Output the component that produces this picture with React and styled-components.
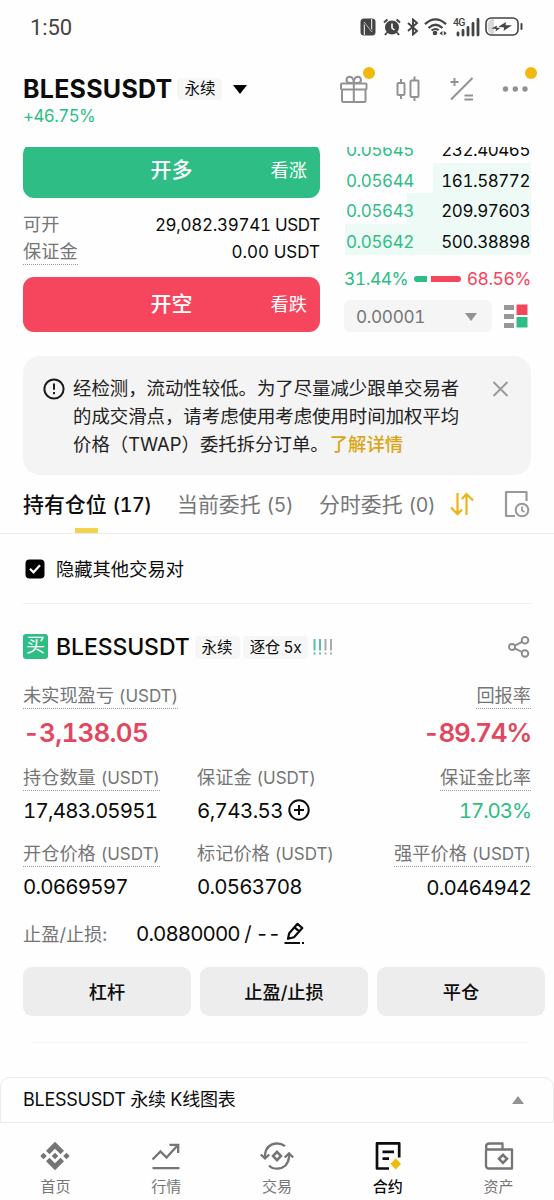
import React, { useState } from 'react'
import styled, { createGlobalStyle } from 'styled-components'

const GlobalStyle = createGlobalStyle`
  * {
    box-sizing: border-box;
  }

  body {
    margin: 0;
    background: #fefefe;
    color: #0c0c0c;
    font-family: Inter, 'Noto Sans CJK SC', sans-serif;
    font-feature-settings: 'tnum';
  }

  svg {
    display: block;
    flex-shrink: 0;
  }

  button {
    font: inherit;
    color: inherit;
    border: none;
    padding: 0;
    cursor: pointer;
  }
`

const green = '#2ebd85'
const red = '#f6465d'
const yellow = '#f0b90b'
const gray = '#757575'
const iconGray = '#929292'

const Screen = styled.main`
  width: 554px;
  height: 1200px;
  overflow: hidden;
  display: flex;
  flex-direction: column;
`

const Text = styled.span`
  font-size: ${props => props.$size || 18}px;
  line-height: ${props => props.$line || 24}px;
  font-weight: ${props => props.$weight || 400};
  letter-spacing: ${props => props.$track || 0}px;
  color: ${props => props.$color || 'inherit'};
  white-space: nowrap;
`

const StatusBar = styled.div`
  height: 55px;
  padding: 0 31px 0 30px;
  display: flex;
  align-items: center;
  justify-content: space-between;
  color: #444;
`

const Clock = styled.span`
  font-family: Roboto, sans-serif;
  font-size: 22px;
  line-height: 54px;
  letter-spacing: -0.1px;
`

const StatusIcons = styled.div`
  display: flex;
  align-items: center;
  height: 20px;
  margin-top: -2px;
`

const Header = styled.header`
  height: 92px;
  padding: 20px 23px 0 23px;
  display: flex;
  justify-content: space-between;
`

const TitleLine = styled.div`
  display: flex;
  align-items: center;
  height: 28px;
`

const TitleArrow = styled.div`
  margin-left: 11px;
`

const Change = styled.div`
  font-size: 17px;
  line-height: 26px;
  letter-spacing: -0.6px;
  color: ${green};
`

const Tag = styled.span`
  height: ${props => props.$height || 22}px;
  padding: 0 ${props => props.$pad || 7}px;
  margin-left: ${props => props.$gap || 5}px;
  border-radius: 4px;
  background: #f6f6f6;
  font-size: 15.5px;
  line-height: ${props => props.$height || 22}px;
  letter-spacing: ${props => props.$track || 0}px;
  white-space: nowrap;
`

const Tools = styled.div`
  display: flex;
  align-items: center;
  gap: 24px;
  height: 28px;
  color: ${iconGray};
`

const Tool = styled.div`
  position: relative;
  width: 30px;
  height: 30px;
`

const Dot = styled.i`
  position: absolute;
  top: -7px;
  right: ${props => props.$right}px;
  width: 12px;
  height: 12px;
  border-radius: 50%;
  background: ${yellow};
`

const TradePanel = styled.section`
  height: 185px;
  padding: 0 23px;
  overflow: hidden;
  display: flex;
  gap: 24px;
`

const OrderForm = styled.div`
  width: 297px;
`

const SideButton = styled.button`
  width: 297px;
  height: 55px;
  margin-top: ${props => props.$top || 0}px;
  padding: 0 13px 1px;
  border-radius: 11px;
  background: ${props => props.$color};
  color: #fff;
  display: grid;
  grid-template-columns: 1fr auto 1fr;
  align-items: center;

  span:last-child {
    justify-self: end;
  }
`

const InfoLine = styled.div`
  display: flex;
  justify-content: space-between;
  height: 27px;
  margin-top: ${props => props.$top || 0}px;
`

const Dotted = styled.span`
  align-self: ${props => props.$end ? 'flex-end' : 'flex-start'};
  height: 25px;
  font-size: 18.2px;
  line-height: 23px;
  color: ${gray};
  white-space: nowrap;
  border-bottom: 1px ${props => props.$plain ? 'solid transparent' : 'dotted #9a9a9a'};
`

const Unit = styled.span`
  font-size: 17px;
  letter-spacing: -0.05px;
`

const Book = styled.div`
  width: 187px;
`

const Levels = styled.div`
  margin: -15px 0 0 1px;
`

const Level = styled.div`
  height: 30.7px;
  padding: 6px 1px 0 1px;
  display: flex;
  justify-content: space-between;
  background: linear-gradient(#eefaf6, #eefaf6) right / ${props => props.$depth}px 100% no-repeat;
`

const Ratio = styled.div`
  margin-top: 12px;
  height: 24px;
  display: flex;
  align-items: center;
  justify-content: space-between;
`

const RatioBar = styled.div`
  width: 47px;
  height: 6px;
  display: flex;
  gap: 4px;
`

const RatioPart = styled.i`
  flex: ${props => props.$share};
  background: ${props => props.$color};
  border-radius: ${props => props.$left ? '3px 0 0 3px' : '0 3px 3px 0'};
`

const StepLine = styled.div`
  margin-top: 9px;
  display: flex;
  align-items: center;
  gap: 12px;
`

const StepSelect = styled.div`
  width: 148px;
  height: 33px;
  padding: 1px 15px 0 12px;
  border-radius: 7px;
  background: #f5f5f5;
  color: ${gray};
  display: flex;
  align-items: center;
  justify-content: space-between;
`

const Notice = styled.section`
  margin: 24px 23px 0;
  height: 119px;
  padding: 19px 22px 0 21px;
  border-radius: 17px;
  background: #f4f4f4;
  display: flex;
  align-items: flex-start;
`

const NoticeText = styled.p`
  margin: 0 0 0 8px;
  width: 390px;
  font-size: 18.4px;
  line-height: 27.9px;
  color: #222;
  white-space: nowrap;

  a {
    color: #dba511;
    font-weight: 500;
    margin-left: -4px;
  }
`

const Tabs = styled.nav`
  height: 59px;
  padding: 0 24px 0 23px;
  display: flex;
  border-bottom: 1px solid #ececec;
`

const Tab = styled.button`
  position: relative;
  width: ${props => props.$width}px;
  height: 59px;
  background: none;
  display: flex;
  align-items: center;
  gap: 6px;
  color: ${props => props.$active ? '#0c0c0c' : '#777'};

  &::after {
    content: '';
    display: ${props => props.$active ? 'block' : 'none'};
    position: absolute;
    left: 52px;
    bottom: 1px;
    width: 23px;
    height: 5px;
    background: #f2d34b;
  }
`

const TabIcon = styled.div`
  margin-top: ${props => props.$top}px;
`

const Filter = styled.label`
  height: 70px;
  margin: 0 23px;
  padding: 1px 0 0 2px;
  display: flex;
  align-items: center;
  gap: 11px;
  border-bottom: 1px solid #f0f0f0;
`

const Position = styled.section`
  padding: 29px 23px 0;
  height: 439px;
`

const PositionHead = styled.div`
  height: 28px;
  display: flex;
  align-items: center;
`

const BuyBadge = styled.span`
  width: 25px;
  height: 25px;
  margin: -1px 8px 0 0;
  border-radius: 3px;
  background: ${green};
  color: #fff;
  font-size: 19px;
  line-height: 24px;
  text-align: center;
`

const Spacer = styled.div`
  flex: 1;
`

const Stats = styled.div`
  display: grid;
  grid-template-columns: 174px 1fr auto;
  height: ${props => props.$height}px;
  margin-top: ${props => props.$top || 0}px;
`

const Stat = styled.div`
  display: flex;
  flex-direction: column;
  align-items: ${props => props.$end ? 'flex-end' : 'flex-start'};
`

const Value = styled.div`
  height: 28px;
  margin-top: ${props => props.$top || 6}px;
  display: flex;
  align-items: center;
  gap: ${props => props.$gap || 0}px;
  font-size: 20.5px;
  line-height: 28px;
  letter-spacing: ${props => props.$track || -0.8}px;
  color: ${props => props.$color || 'inherit'};
  white-space: nowrap;
`

const Pnl = styled(Value)`
  margin-top: 10px;
  font-size: 26px;
  font-weight: 600;
  letter-spacing: ${props => props.$track}px;
  color: #e2475f;
`

const StopLine = styled.div`
  display: flex;
  align-items: center;
  height: 28px;
`

const StopLabel = styled.span`
  width: 113px;
  margin-top: -2px;
  font-size: 18.2px;
  color: ${gray};
`

const Actions = styled.div`
  display: grid;
  grid-template-columns: repeat(3, 168px);
  gap: 9px;
  margin-top: 19px;
`

const Action = styled.button`
  height: 49px;
  padding-bottom: 1px;
  border-radius: 9px;
  background: #ededed;
  font-size: 18.2px;
  font-weight: 500;
`

const Divider = styled.hr`
  border: none;
  height: 1px;
  margin: 26px 3px 0 8px;
  background: #f6f6f6;
`

const ChartDrawer = styled.section`
  margin-top: 34px;
  height: 46px;
  padding: 0 29px 0 22px;
  border: 1px solid #ebebeb;
  border-radius: 10px 10px 0 0;
  display: flex;
  align-items: center;
  justify-content: space-between;
  flex-shrink: 0;
`

const BottomNav = styled.nav`
  display: grid;
  grid-template-columns: repeat(5, 110.8px);
  height: 77px;
  padding-top: 18px;
`

const NavItem = styled.div`
  display: flex;
  flex-direction: column;
  align-items: center;
  font-size: 15px;
  line-height: 20px;
  gap: 6px;
  font-weight: ${props => props.$active ? 500 : 400};
  color: ${props => props.$active ? '#0c0c0c' : gray};
`

const Glyph = styled.svg`
  margin-left: ${props => props.$left || 0}px;
  margin-top: ${props => props.$top || 0}px;
`

const Svg = ({ w, h, children, ...rest }) => (
  <Glyph width={w} height={h} viewBox={`0 0 ${w} ${h}`} fill="none" stroke="currentColor" strokeWidth="2" {...rest}>
    {children}
  </Glyph>
)

const Triangle = ({ w, h, up, color }) => (
  <Svg w={w} h={h} stroke="none" fill={color}>
    <path d={up ? `M0 ${h}L${w / 2} 0L${w} ${h}Z` : `M0 0H${w}L${w / 2} ${h}Z`} />
  </Svg>
)

const StatusGlyphs = () => (
  <StatusIcons>
    <Svg w={16} h={18}>
      <rect x="0.5" y="0.5" width="15" height="17" rx="3.5" fill="currentColor" stroke="none" />
      <path d="M4.3 17V4.2L11.7 14M11.7 1V13.8L4.3 4" stroke="#fff" strokeWidth="1" />
      <path d="M3.2 1.5L12.5 13.5M3.5 4.5L12.8 16.5" strokeWidth="1.2" />
    </Svg>
    <Svg w={18} h={18} $left={7}>
      <circle cx="9" cy="9.5" r="7" fill="currentColor" stroke="none" />
      <path d="M1 4.5L4.5 1.5M17 4.5L13.5 1.5M4 14.5L2 17M14 14.5L16 17" />
      <path d="M9 5.5V10L11.5 12" stroke="#fff" strokeWidth="1.6" />
    </Svg>
    <Svg w={12} h={18} $left={6}>
      <path d="M1 5L10 13L6 16.5V1.5L10 5L1 13" strokeWidth="1.9" />
    </Svg>
    <Svg w={24} h={18} $left={5}>
      <path d="M1 6.2Q11.5 -3.5 22 6.2M4.5 10Q11.5 3.5 18.5 10" strokeWidth="2.3" />
      <path d="M7.6 12.6Q11 9.8 14.6 12.2" strokeWidth="2" />
      <circle cx="11" cy="15" r="2.3" fill="currentColor" stroke="none" />
      <path d="M18.4 13V17.5L15.5 15.2ZM19.8 13V17.5L22.8 15.2Z" fill="currentColor" stroke="none" />
    </Svg>
    <Svg w={27} h={20} $left={5}>
      <text x="0" y="9" fontFamily="Roboto" fontSize="10.5" fontWeight="500" stroke="none" fill="currentColor" textLength="12.5">4G</text>
      <path d="M5 16V18M10 13.5V18M15 10.5V18M20 6.5V18M25 2.5V18" strokeWidth="2.8" strokeLinecap="round" />
    </Svg>
    <Svg w={38} h={19} $left={5}>
      <path d="M6 2H9V17H6Q3 16 2.5 10Q3 3 6 2Z" fill="#d8d8d8" stroke="none" />
      <rect x="1" y="1" width="32" height="17" rx="5" strokeWidth="1.6" />
      <path d="M36.5 7V12" strokeWidth="2" strokeLinecap="round" />
      <path d="M6.5 11.5L12 8.5L11.5 10.8H15.5L10.5 14.5L11 12Z" fill="currentColor" stroke="none" />
      <path d="M13.5 9.8L21 5L20.5 8.2H27L18.5 14L19.2 10.5Z" fill="currentColor" stroke="none" />
    </Svg>
  </StatusIcons>
)

const Gift = () => (
  <Svg w={30} h={30}>
    <rect x="2" y="9.5" width="25.5" height="6" rx="1" />
    <path d="M3 15.5V26.5Q3 28 4.5 28H25Q26.5 28 26.5 26.5V15.5M14.8 9V28" />
    <path d="M14.8 9H11Q7.5 8.8 7.5 6Q7.7 2.8 11 2.8Q14.5 3 14.8 9Q15 3 18.5 2.8Q21.8 2.8 22 6Q22 8.8 18.5 9Z" />
  </Svg>
)

const Candles = () => (
  <Svg w={30} h={30}>
    <rect x="4.5" y="9" width="7" height="12" rx="1" />
    <rect x="17.5" y="6.5" width="8" height="16.5" rx="1" />
    <path d="M8 5V9M8 21V25M21.5 2.5V6.5M21.5 23V27" />
  </Svg>
)

const PlusEquals = () => (
  <Svg w={30} h={30}>
    <path d="M4 25.5L25.5 4M3.5 8H11.5M7.5 4V12M17.5 21.5H26M17.5 25.5H26" />
  </Svg>
)

const More = () => (
  <Svg w={30} h={30} stroke="none" fill="currentColor">
    <circle cx="4.5" cy="15" r="2.7" />
    <circle cx="14.3" cy="15" r="2.7" />
    <circle cx="24" cy="15" r="2.7" />
  </Svg>
)

const BookIcon = () => (
  <Svg w={24} h={24} stroke="none">
    <path d="M0 1H10V6H0ZM0 10H10V15H0ZM0 19H10V24H0Z" fill="#979797" />
    <path d="M12.5 0.5H23.5V11H12.5Z" fill={red} />
    <path d="M12.5 13H23.5V23.5H12.5Z" fill={green} />
  </Svg>
)

const Info = () => (
  <Svg w={22} h={28} $left={-1} stroke="#1b1b1b">
    <circle cx="11" cy="14" r="9.6" />
    <path d="M11 8.5V14.8M11 17V19.3" strokeWidth="2" />
  </Svg>
)

const SortIcon = () => (
  <Svg w={24} h={26} stroke="#eab51a" strokeWidth="2.2">
    <path d="M7.5 2V23M1 16.5L7.5 23.2L12 18.5M16.5 24V3M11.8 8L16.5 3L23 9.5" />
  </Svg>
)

const HistoryIcon = () => (
  <Svg w={26} h={28} stroke="#999">
    <path d="M22.5 11V2H2V26H11" strokeWidth="2.2" strokeLinejoin="round" />
    <circle cx="18" cy="20" r="6.3" />
    <path d="M18 16.5V20.5L20.5 22" strokeWidth="1.7" />
  </Svg>
)

const CheckIcon = () => (
  <Svg w={20} h={20}>
    <rect x="0.5" y="0.5" width="19" height="19" rx="4" fill="#000" stroke="none" />
    <path d="M5 9.8L8.5 13.3L15 6.3" stroke="#fff" strokeWidth="2.2" />
  </Svg>
)

const RiskBars = () => (
  <Svg w={20} h={18} $left={5} $top={-1}>
    <path d="M1.5 1V12.5M7 1V12.5" stroke="#50c59b" />
    <path d="M12.5 1V12.5M18 1V12.5" stroke="#aaa" />
    <path d="M1.5 14.5V16.5M7 14.5V16.5" stroke="#50c59b" />
    <path d="M12.5 14.5V16.5M18 14.5V16.5" stroke="#aaa" />
  </Svg>
)

const ShareIcon = () => (
  <Svg w={23} h={22} $top={-1} stroke="#8c8c8c" strokeWidth="1.9">
    <circle cx="4" cy="11" r="3" />
    <circle cx="17" cy="4.3" r="3.3" />
    <circle cx="17" cy="17.5" r="3.3" />
    <path d="M6.8 9.6L14 5.8M6.8 12.4L14 16" />
  </Svg>
)

const PlusCircle = () => (
  <Svg w={22} h={22} $top={-2}>
    <circle cx="11" cy="11" r="9.7" />
    <path d="M6 11H16M11 6V16" />
  </Svg>
)

const PenIcon = () => (
  <Svg w={22} h={24} $left={4} $top={-3}>
    <path d="M4 17.8L5.2 12.2L13.5 2.8L18.3 7L10 16.3L4 17.8ZM10.5 6.3L15.2 10.3" strokeWidth="2.2" strokeLinejoin="round" />
    <path d="M0.5 22H16M18 22H20" strokeWidth="2.2" />
  </Svg>
)

const navIcons = {
  home: (
    <Svg w={30} h={30} stroke="none" fill="currentColor">
      <path d="M15 0.8L24 9.8L20.5 13.2L15 7.7L9.5 13.2L6 9.8ZM15 29.2L24 20.2L20.5 16.8L15 22.3L9.5 16.8L6 20.2ZM15 11.7L18.3 15L15 18.3L11.7 15ZM3.5 11.8L6.8 15L3.5 18.2L0.3 15ZM26.5 11.8L29.7 15L26.5 18.2L23.2 15Z" />
    </Svg>
  ),
  market: (
    <Svg w={30} h={30} strokeWidth="2.3">
      <path d="M1.5 18.5L9.5 10.5L15.5 16.5L26.5 4.5M18.5 3.8H27.2V12M1.5 27.2H28.5" />
    </Svg>
  ),
  trade: (
    <Svg w={36} h={30} strokeWidth="2.3">
      <path d="M6 17V14Q7 3 18 2.3Q22.5 2.3 26 5.2M1.8 13.5L6 17.5L10.3 13.5M30 13V16Q29 27 18 27.7Q13 27.7 10 24.5M25.7 16.5L30 12.3L34.2 16.5" />
      <path d="M18 10.8L22 15L18 19.2L14 15Z" strokeWidth="2.6" />
    </Svg>
  ),
  futures: (
    <Svg w={30} h={30} strokeWidth="2.7">
      <path d="M26.2 16.5V2.3H4V27.5H16M9.5 10.8H21M9.5 17.7H16" strokeLinejoin="round" />
      <path d="M22.8 17.3L28 23L22.8 28.5L17.5 23Z" fill={yellow} stroke="none" />
    </Svg>
  ),
  assets: (
    <Svg w={30} h={30} strokeWidth="2.3">
      <path d="M2 8.5V24.5Q2 27.5 5 27.5H28V8.5H4.5Q2 8.5 2 6Q2 2.5 5.5 2.5H18.5V8.5" strokeLinejoin="round" />
      <path d="M19 13.8L23 17.8L19 21.8L15 17.8Z" strokeWidth="2.6" />
    </Svg>
  )
}

const levels = [
  { price: '0.05645', amount: '232.40465', depth: 0 },
  { price: '0.05644', amount: '161.58772', depth: 98 },
  { price: '0.05643', amount: '209.97603', depth: 124 },
  { price: '0.05642', amount: '500.38898', depth: 186 }
]

const tabs = [
  { name: '持有仓位', count: 17, width: 154 },
  { name: '当前委托', count: 5, width: 142 },
  { name: '分时委托', count: 0, width: 131 }
]

const navItems = [
  { key: 'home', label: '首页' },
  { key: 'market', label: '行情' },
  { key: 'trade', label: '交易' },
  { key: 'futures', label: '合约' },
  { key: 'assets', label: '资产' }
]

const App = () => {
  const [activeTab, setActiveTab] = useState(0)

  return (
    <Screen lang="zh-CN">
      <GlobalStyle />
      <StatusBar>
        <Clock>1:50</Clock>
        <StatusGlyphs />
      </StatusBar>

      <Header>
        <div>
          <TitleLine>
            <Text $size={25} $weight={700} $track={0.25} $line={28}>BLESSUSDT</Text>
            <Tag>永续</Tag>
            <TitleArrow><Triangle w={14} h={9} color="#000" /></TitleArrow>
          </TitleLine>
          <Change>+46.75%</Change>
        </div>
        <Tools>
          <Tool><Gift /><Dot $right={-6} /></Tool>
          <Tool><Candles /></Tool>
          <Tool><PlusEquals /></Tool>
          <Tool><More /><Dot $right={-6} /></Tool>
        </Tools>
      </Header>

      <TradePanel>
        <OrderForm>
          <SideButton $color={green} $top={-4}>
            <span />
            <Text $size={21} $weight={500}>开多</Text>
            <Text $size={18.2}>看涨</Text>
          </SideButton>
          <InfoLine $top={15}>
            <Dotted $plain>可开</Dotted>
            <Text $size={17} $track={-0.3}>29,082.39741 USDT</Text>
          </InfoLine>
          <InfoLine>
            <Dotted>保证金</Dotted>
            <Text $size={17} $track={0}>0.00 USDT</Text>
          </InfoLine>
          <SideButton $color={red} $top={10}>
            <span />
            <Text $size={21} $weight={500}>开空</Text>
            <Text $size={18.2}>看跌</Text>
          </SideButton>
        </OrderForm>

        <Book>
          <Levels>
            {levels.map(level => (
              <Level key={level.price} $depth={level.depth}>
                <Text $size={17} $color={green} $track={-0.4}>{level.price}</Text>
                <Text $size={17} $track={-0.45}>{level.amount}</Text>
              </Level>
            ))}
          </Levels>
          <Ratio>
            <Text $size={17.5} $color={green} $track={-0.5}>31.44%</Text>
            <RatioBar>
              <RatioPart $share={13} $color={green} $left />
              <RatioPart $share={30} $color={red} />
            </RatioBar>
            <Text $size={17.5} $color={red} $track={-0.5}>68.56%</Text>
          </Ratio>
          <StepLine>
            <StepSelect>
              <Text $size={17.2} $track={-0.35}>0.00001</Text>
              <Triangle w={12} h={8} color="#929292" />
            </StepSelect>
            <BookIcon />
          </StepLine>
        </Book>
      </TradePanel>

      <Notice>
        <Info />
        <NoticeText>
          经检测，流动性较低。为了尽量减少跟单交易者<br />
          的成交滑点，请考虑使用考虑使用时间加权平均<br />
          价格（TWAP）委托拆分订单。 <a>了解详情</a>
        </NoticeText>
        <Spacer />
        <Svg w={17} h={28} stroke="#999" strokeWidth="1.9">
          <path d="M1.5 7L15.5 21M15.5 7L1.5 21" />
        </Svg>
      </Notice>

      <Tabs>
        {tabs.map((tab, index) => (
          <Tab key={tab.name} $width={tab.width} $active={index === activeTab} onClick={() => setActiveTab(index)}>
            <Text $size={20.9} $weight={index === activeTab ? 500 : 400}>{tab.name}</Text>
            <Text $size={19.5} $track={-0.4} $weight={index === activeTab ? 500 : 400}>({tab.count})</Text>
          </Tab>
        ))}
        <TabIcon $top={16}><SortIcon /></TabIcon>
        <Spacer />
        <TabIcon $top={15}><HistoryIcon /></TabIcon>
      </Tabs>

      <Filter>
        <CheckIcon />
        <Text $size={18.3}>隐藏其他交易对</Text>
      </Filter>

      <Position>
        <PositionHead>
          <BuyBadge>买</BuyBadge>
          <Text $size={23} $weight={500} $track={-0.1} $line={28}>BLESSUSDT</Text>
          <Tag $height={23} $pad={7}>永续</Tag>
          <Tag $height={23} $pad={7} $gap={3} $track={-0.4}>逐仓 5x</Tag>
          <RiskBars />
          <Spacer />
          <ShareIcon />
        </PositionHead>

        <Stats $height={82} $top={23}>
          <Stat>
            <Dotted>未实现盈亏 <Unit>(USDT)</Unit></Dotted>
            <Pnl $track={-0.75}>-3,138.05</Pnl>
          </Stat>
          <span />
          <Stat $end>
            <Dotted $end>回报率</Dotted>
            <Pnl $track={-1.3}>-89.74%</Pnl>
          </Stat>
        </Stats>

        <Stats $height={76}>
          <Stat>
            <Dotted>持仓数量 <Unit>(USDT)</Unit></Dotted>
            <Value>17,483.05951</Value>
          </Stat>
          <Stat>
            <Dotted $plain>保证金 <Unit>(USDT)</Unit></Dotted>
            <Value $track={-0.6} $gap={5}>6,743.53<PlusCircle /></Value>
          </Stat>
          <Stat $end>
            <Dotted $end>保证金比率</Dotted>
            <Value $color={green} $track={-1.1}>17.03%</Value>
          </Stat>
        </Stats>

        <Stats $height={78}>
          <Stat>
            <Dotted>开仓价格 <Unit>(USDT)</Unit></Dotted>
            <Value>0.0669597</Value>
          </Stat>
          <Stat>
            <Dotted $plain>标记价格 <Unit>(USDT)</Unit></Dotted>
            <Value>0.0563708</Value>
          </Stat>
          <Stat $end>
            <Dotted $end>强平价格 <Unit>(USDT)</Unit></Dotted>
            <Value $top={7}>0.0464942</Value>
          </Stat>
        </Stats>

        <StopLine>
          <StopLabel>止盈/止损:</StopLabel>
          <Text $size={20.5} $track={-0.9}>0.0880000 / --</Text>
          <PenIcon />
        </StopLine>

        <Actions>
          <Action>杠杆</Action>
          <Action>止盈/止损</Action>
          <Action>平仓</Action>
        </Actions>
        <Divider />
      </Position>

      <ChartDrawer>
        <Text $size={18} $track={-0.25}>BLESSUSDT 永续 K线图表</Text>
        <Triangle w={12} h={8} up color="#929292" />
      </ChartDrawer>

      <BottomNav>
        {navItems.map(item => (
          <NavItem key={item.key} $active={item.key === 'futures'}>
            {navIcons[item.key]}
            {item.label}
          </NavItem>
        ))}
      </BottomNav>
    </Screen>
  )
}

export default App
